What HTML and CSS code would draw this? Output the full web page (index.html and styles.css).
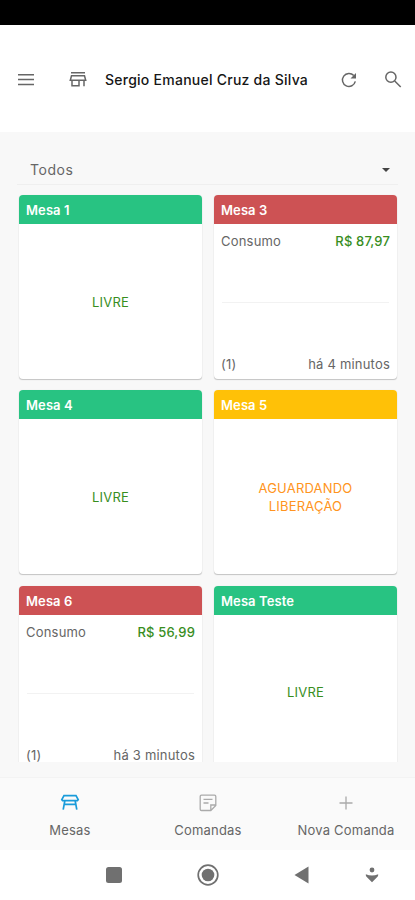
FILE: index.html
```html
<!DOCTYPE html>
<html lang="pt-BR">
<head>
<meta charset="utf-8">
<title>Mesas</title>
<link rel="stylesheet" href="styles.css">
</head>
<body>
<div class="status-bar"></div>
<header class="app-bar">
  <svg class="menu-icon" width="18" height="14" viewBox="0 0 18 14"><path d="M1 1.8h16M1 6.5h16M1 11.5h16"/></svg>
  <svg class="store-icon" width="18" height="17" viewBox="0 0 18 17"><path d="M2 1.7h14M2.5 4.8h13l1.2 4.4H1.3zM3 9.2v5.6h7V9.2M15 9.2v6"/></svg>
  <h1>Sergio Emanuel Cruz da Silva</h1>
  <svg class="refresh-icon" width="18" height="18" viewBox="0 0 18 18"><path d="M15.3 10.4A6.5 6.5 0 1 1 13.8 4.6"/><path class="solid" d="M16 2v5.5h-5.5z"/></svg>
  <svg class="search-icon" width="18" height="18" viewBox="0 0 18 18"><circle cx="6.9" cy="6.2" r="5.1"/><path d="M10.7 10l6 6"/></svg>
</header>
<main>
  <div class="filter"><span>Todos</span><i class="caret"></i></div>
  <section class="tables">
    <article class="card free"><h2>Mesa 1</h2><p class="state">LIVRE</p></article>
    <article class="card busy"><h2>Mesa 3</h2>
      <div class="row"><span>Consumo</span><b>R$ 87,97</b></div><hr>
      <div class="row foot"><span>(1)</span><span>há 4 minutos</span></div></article>
    <article class="card free"><h2>Mesa 4</h2><p class="state">LIVRE</p></article>
    <article class="card waiting"><h2>Mesa 5</h2><p class="state">AGUARDANDO<br>LIBERAÇÃO</p></article>
    <article class="card busy"><h2>Mesa 6</h2>
      <div class="row"><span>Consumo</span><b>R$ 56,99</b></div><hr>
      <div class="row foot"><span>(1)</span><span>há 3 minutos</span></div></article>
    <article class="card free"><h2>Mesa Teste</h2><p class="state">LIVRE</p></article>
  </section>
</main>
<nav class="tabs">
  <a class="active"><svg width="20" height="20" viewBox="0 0 20 20"><path d="M4 2.6h12l2.2 4-.8 1H2.6l-.8-1zM4.8 8 3.2 16.6M15.2 8l1.6 8.6M4.6 11.4h10.8"/></svg><span>Mesas</span></a>
  <a><svg width="20" height="20" viewBox="0 0 20 20"><path d="M3.5 2.2h13a1.3 1.3 0 0 1 1.3 1.3v9l-5 5H3.5a1.3 1.3 0 0 1-1.3-1.3V3.5a1.3 1.3 0 0 1 1.3-1.3zM17.8 12h-5v5.5M5.5 6.3h9M5.5 10h5"/></svg><span>Comandas</span></a>
  <a><svg width="20" height="20" viewBox="0 0 20 20"><path d="M10 3.5v13M3.5 10h13"/></svg><span>Nova Comanda</span></a>
</nav>
<footer class="system-bar">
  <svg class="recent" width="16" height="16" viewBox="0 0 16 16"><rect width="16" height="16" rx="2.5"/></svg>
  <svg class="home" width="22" height="22" viewBox="0 0 22 22"><circle class="ring" cx="11" cy="11" r="9.8"/><circle cx="11" cy="11" r="6.3"/></svg>
  <svg class="back" width="15" height="18" viewBox="0 0 15 18"><path d="M14.5.5v17L.5 9z"/></svg>
  <svg class="drop" width="14" height="16" viewBox="0 0 14 16"><circle cx="7" cy="3" r="2.4"/><path d="M.8 7.2Q7 10 13.2 7.2 13.5 9 12 10.3L7 15.2 2 10.3Q.5 9 .8 7.2z"/></svg>
</footer>
</body>
</html>
```
FILE: styles.css
```css
* { box-sizing: border-box; }
body {
  margin: 0;
  width: 415px;
  height: 900px;
  display: flex;
  flex-direction: column;
  overflow: hidden;
  background: #f8f8f8;
  color: #666;
  font: 400 13px/18px Inter, "Liberation Sans", sans-serif;
  letter-spacing: .2px;
}
svg { display: block; flex: none; fill: none; stroke: #666; stroke-width: 1.5; }
.status-bar { flex: 0 0 25px; background: #000; }
.app-bar {
  flex: 0 0 107px;
  display: flex;
  align-items: center;
  padding: 2px 13px 0 17px;
  background: #fff;
}
.store-icon { margin-left: 34px; }
.app-bar h1 {
  margin: 0 auto 0 18px;
  color: #161616;
  font-size: 14px;
  font-weight: 500;
  letter-spacing: .25px;
  white-space: nowrap;
}
.refresh-icon .solid { fill: #666; stroke: none; }
.search-icon { margin-left: 26px; }
main { flex: 0 0 630px; padding: 0 18px 0 19px; overflow: hidden; }
.filter {
  height: 53px;
  margin: 0 -1px 10px -2px;
  padding: 23px 8px 0 13px;
  display: flex;
  justify-content: space-between;
  align-items: center;
  border-bottom: 1px solid #efefef;
  font-size: 14px;
  line-height: 29px;
  letter-spacing: .55px;
}
.caret { border: 4.5px solid transparent; border-top-color: #444; border-bottom: 0; }
.tables {
  display: grid;
  grid-template-columns: 183px 183px;
  grid-auto-rows: 184px;
  gap: 11.3px 12px;
}
.card {
  display: flex;
  flex-direction: column;
  border-radius: 4px;
  background: #fff;
  box-shadow: 0 1px 1px -.5px #0003, 0 0 2px #0000000d;
}
.card h2 {
  flex: 0 0 29px;
  margin: 0;
  padding: 1px 7px 0;
  border-radius: 4px 4px 0 0;
  color: #fff;
  font-size: 13px;
  font-weight: 600;
  line-height: 28px;
  letter-spacing: .1px;
}
.free h2 { background: #28c382; }
.busy h2 { background: #cd5254; }
.waiting h2 { background: #ffc107; }
.state { margin: auto; text-align: center; color: #388e1e; }
.waiting .state { color: #ff9420; }
.row { display: flex; justify-content: space-between; padding: 8px 7px 0; }
.row b { font-weight: 500; color: #388e1e; letter-spacing: .15px; }
.foot { padding: 0 7px 6px; }
.card hr { width: 167px; height: 1px; margin: auto; border: 0; background: #f2f2f2; }
.tabs {
  flex: 0 0 73px;
  margin-top: 15px;
  display: grid;
  grid-template-columns: repeat(3, 1fr);
  padding-left: 1px;
  border-top: 1px solid #f3f3f3;
  background: #fafafa;
}
.tabs a {
  display: flex;
  flex-direction: column;
  align-items: center;
  gap: 8px;
  padding-top: 15px;
  white-space: nowrap;
}
.tabs svg { stroke: #aaa; stroke-width: 1.3; }
.tabs .active svg { stroke: #189bda; stroke-width: 1.7; }
.system-bar {
  flex: 0 0 50px;
  display: flex;
  align-items: center;
  padding: 0 36px 0 106px;
  background: #fff;
}
.system-bar svg { fill: #707070; stroke: none; }
.system-bar .ring { fill: none; stroke: #707070; stroke-width: 1.7; }
.home { margin-left: 75px; }
.back { margin-left: 75px; }
.drop { margin-left: auto; }
```
